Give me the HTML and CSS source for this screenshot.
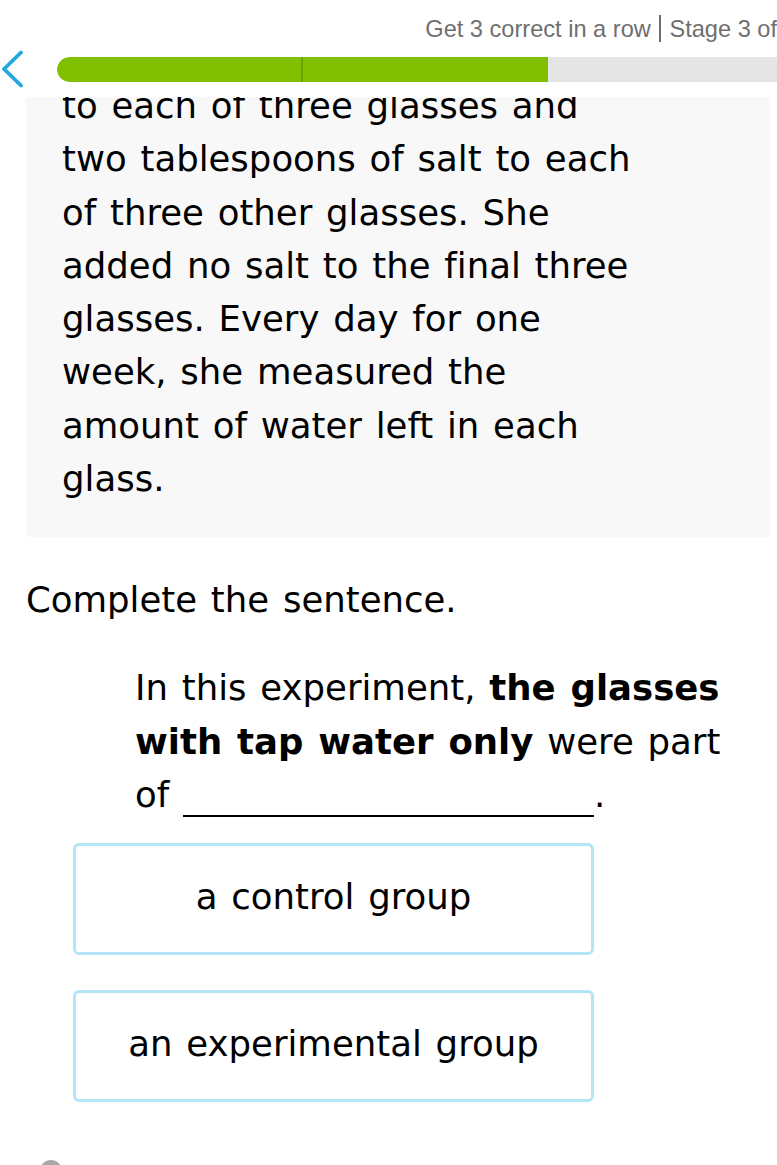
FILE: index.html
```html
<!DOCTYPE html>
<html lang="en">
<head>
<meta charset="utf-8">
<title>Complete the sentence</title>
<link rel="stylesheet" href="styles.css">
</head>
<body>
<header class="top">
  <div class="status">Get 3 correct in a row <span class="sep"></span> Stage 3 of</div>
  <div class="progress-row">
    <svg class="back" width="26" height="38" viewBox="0 0 26 38" aria-hidden="true">
      <polyline points="21,2.5 4,19 21,35.5" fill="none" stroke="#22a7e0" stroke-width="3.8" stroke-linecap="round" stroke-linejoin="round"/>
    </svg>
    <div class="track">
      <div class="fill" style="width: 491px"><span class="tick"></span></div>
    </div>
  </div>
</header>

<main class="content">
  <section class="passage">
    <p>to each of three glasses and two tablespoons of salt to each of three other glasses. She added no salt to the final three glasses. Every day for one week, she measured the amount of water left in each glass.</p>
  </section>

  <h2 class="prompt">Complete the sentence.</h2>

  <p class="sentence">In this experiment, <b>the glasses with tap water only</b> were part of <span class="blank"></span>.</p>

  <div class="options">
    <button class="option" type="button">a control group</button>
    <button class="option" type="button">an experimental group</button>
  </div>

  <div class="peek"></div>
</main>
</body>
</html>
```

FILE: styles.css
```css
html, body {
  margin: 0;
  padding: 0;
  background: #ffffff;
  overflow: hidden;
}

body {
  font-family: "DejaVu Sans", Verdana, sans-serif;
  font-size: 35.5px;
  line-height: 1.5;
  word-spacing: 2.5px;
  color: #000;
  font-variant-ligatures: none;
}

/* ---------- header (overlays scrolled content) ---------- */
.top {
  position: fixed;
  top: 0;
  left: 0;
  right: 0;
  height: 97px;
  background: #fff;
  z-index: 10;
  display: flex;
  flex-direction: column;
}

.status {
  height: 44px;
  padding-top: 14px;
  box-sizing: border-box;
  font-family: "Liberation Sans", Arial, sans-serif;
  font-size: 23.6px;
  line-height: 30px;
  word-spacing: 0;
  color: #6f6f6f;
  text-align: right;
  white-space: nowrap;
  overflow: hidden;
}

.sep {
  display: inline-block;
  width: 1.5px;
  height: 27px;
  background: #6f6f6f;
  vertical-align: -5px;
  margin: 0 2px;
}

.progress-row {
  margin-top: 6px;
  height: 38px;
  display: flex;
  align-items: center;
}

.back {
  display: block;
  flex: none;
}

.track {
  flex: 1;
  height: 25px;
  margin-left: 31px;
  background: #e5e5e5;
  border-radius: 12.5px 0 0 12.5px;
  overflow: hidden;
  display: flex;
}

.fill {
  height: 100%;
  background: #80c000;
  border-radius: 12.5px 0 0 12.5px;
  position: relative;
}

.tick {
  position: absolute;
  left: 244px;
  top: 0;
  width: 2px;
  height: 100%;
  background: #6aa400;
}

/* ---------- content ---------- */
.content {
  padding-top: 59px;
  display: flex;
  flex-direction: column;
}

.passage {
  margin: 0 7px 0 26px;
  padding: 20px 130px 32px 36px;
  background: #f8f8f8;
  border-radius: 4px;
}

.passage p {
  margin: 0;
}

.prompt {
  margin: 36px 0 0 26px;
  font-size: inherit;
  font-weight: normal;
  line-height: inherit;
}

.sentence {
  margin: 35px 0 0 135px;
  width: 600px;
}

.sentence b {
  font-weight: bold;
}

.blank {
  display: inline-block;
  width: 411px;
  height: 0;
  border-bottom: 2px solid #000;
  vertical-align: -10px;
}

.options {
  margin: 22px 0 0 73px;
  width: 521px;
  display: flex;
  flex-direction: column;
  gap: 35px;
}

.option {
  height: 112px;
  box-sizing: border-box;
  border: 3px solid #b3e4f7;
  border-radius: 6px;
  background: #fff;
  font: inherit;
  word-spacing: inherit;
  letter-spacing: inherit;
  font-variant-ligatures: none;
  color: #000;
  display: flex;
  align-items: center;
  justify-content: center;
  padding: 0 0 4px;
}

.peek {
  margin: 58px 0 0 40px;
  width: 22px;
  height: 22px;
  border-radius: 50%;
  background: #a8a8a8;
}
```
